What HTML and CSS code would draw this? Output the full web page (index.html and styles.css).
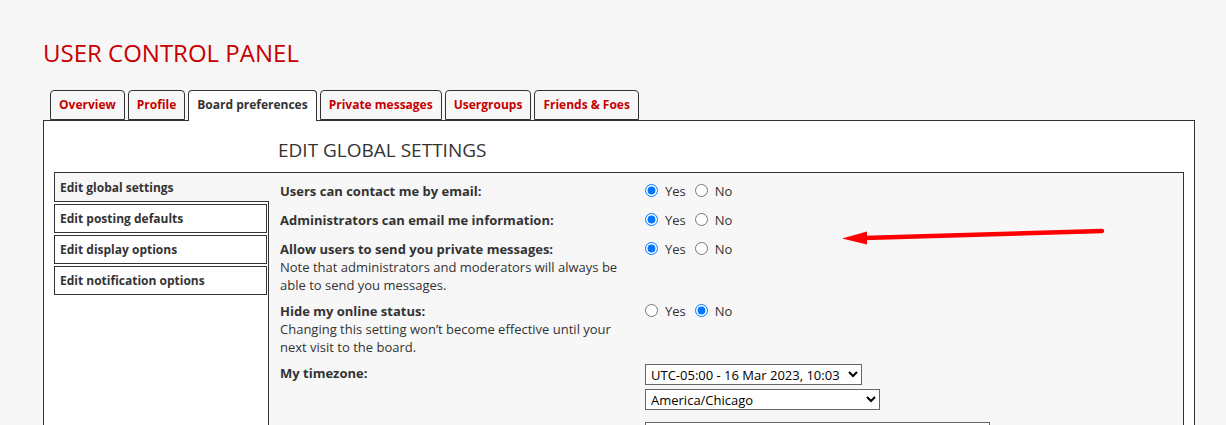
FILE: index.html
```html
<!DOCTYPE html>
<html lang="en">
<head>
  <meta charset="UTF-8">
  <title>User Control Panel</title>
  <link rel="stylesheet" href="styles.css">
</head>
<body>
  <div class="page">
    <h1 class="title">USER CONTROL PANEL</h1>

    <ul class="tabs">
      <li class="tab"><a href="#">Overview</a></li>
      <li class="tab"><a href="#">Profile</a></li>
      <li class="tab active"><a href="#">Board preferences</a></li>
      <li class="tab"><a href="#">Private messages</a></li>
      <li class="tab"><a href="#">Usergroups</a></li>
      <li class="tab"><a href="#">Friends &amp; Foes</a></li>
    </ul>

    <div class="panel">
      <h2 class="heading">EDIT GLOBAL SETTINGS</h2>

      <ul class="menu">
        <li class="menu-item active"><a href="#">Edit global settings</a></li>
        <li class="menu-item"><a href="#">Edit posting defaults</a></li>
        <li class="menu-item"><a href="#">Edit display options</a></li>
        <li class="menu-item"><a href="#">Edit notification options</a></li>
      </ul>

      <form class="box">
        <div class="row">
          <div class="label"><b>Users can contact me by email:</b></div>
          <div class="radios">
            <label><input type="radio" name="email" checked> Yes</label>
            <label><input type="radio" name="email"> No</label>
          </div>
        </div>
        <div class="row">
          <div class="label"><b>Administrators can email me information:</b></div>
          <div class="radios">
            <label><input type="radio" name="massemail" checked> Yes</label>
            <label><input type="radio" name="massemail"> No</label>
          </div>
        </div>
        <div class="row">
          <div class="label">
            <b>Allow users to send you private messages:</b>
            <span>Note that administrators and moderators will always be able to send you messages.</span>
          </div>
          <div class="radios">
            <label><input type="radio" name="pm" checked> Yes</label>
            <label><input type="radio" name="pm"> No</label>
          </div>
        </div>
        <div class="row">
          <div class="label">
            <b>Hide my online status:</b>
            <span>Changing this setting won’t become effective until your next visit to the board.</span>
          </div>
          <div class="radios">
            <label><input type="radio" name="hideonline"> Yes</label>
            <label><input type="radio" name="hideonline" checked> No</label>
          </div>
        </div>
        <div class="row">
          <div class="label"><b>My timezone:</b></div>
          <div class="field">
            <select class="select tz-date">
              <option>UTC-05:00 - 16 Mar 2023, 10:03</option>
            </select>
            <select class="select tz-zone">
              <option>America/Chicago</option>
            </select>
          </div>
        </div>
        <div class="row">
          <div class="label"></div>
          <div class="field">
            <select class="select date-format">
              <option>Thu Mar 16, 2023 10:03 am</option>
            </select>
          </div>
        </div>
      </form>
    </div>
  </div>

  <svg class="arrow" width="270" height="30" viewBox="0 0 270 30">
    <line x1="260" y1="6" x2="22" y2="13" stroke="#f00" stroke-width="4.5" stroke-linecap="round"/>
    <polygon points="0,13.5 25,6.5 25,19.5" fill="#f00"/>
  </svg>
</body>
</html>
```

FILE: styles.css
```css
body {
  margin: 0;
  background: #f7f7f7;
  color: #333;
  font-family: "Open Sans", "Noto Sans", sans-serif;
  font-size: 13px;
}
ul {
  margin: 0;
  padding: 0;
  list-style: none;
}
a {
  text-decoration: none;
}
.page {
  padding: 0 31px 0 43px;
}
.title {
  margin: 37px 0 21px;
  font-size: 24px;
  line-height: 32px;
  font-weight: normal;
  color: #c80000;
}

/* tabs */
.tabs {
  display: flex;
  align-items: flex-start;
  gap: 3px;
  margin-left: 7px;
  height: 30px;
}
.tab {
  height: 30px;
  box-sizing: border-box;
  border: 1px solid #333;
  border-radius: 4px 4px 0 0;
  background: #f7f7f7;
}
.tab a {
  display: block;
  padding: 0 8px;
  line-height: 28px;
  font-size: 12px;
  font-weight: bold;
  color: #c80000;
}
.tab.active {
  height: 31px;
  margin-bottom: -1px;
  border-bottom: none;
  background: #fff;
  position: relative;
  z-index: 1;
}
.tab.active a {
  color: #333;
}

/* panel */
.panel {
  display: grid;
  grid-template-columns: 213px 1fr;
  column-gap: 1px;
  border: 1px solid #333;
  background: #fff;
  padding: 16px 10px 0;
}
.heading {
  grid-column: 2;
  margin: 0 0 9px;
  padding-left: 10px;
  font-size: 19px;
  line-height: 26px;
  font-weight: normal;
  color: #333;
}

/* side menu */
.menu {
  grid-column: 1;
  display: flex;
  flex-direction: column;
  gap: 2px;
}
.menu-item {
  height: 29px;
  box-sizing: border-box;
  border: 1px solid #333;
}
.menu-item a {
  display: block;
  padding-left: 5px;
  line-height: 27px;
  font-size: 12px;
  font-weight: bold;
  color: #333;
}
.menu-item.active {
  height: 30px;
  margin-right: -2px;
  border-right: none;
  background: #f7f7f7;
  position: relative;
  z-index: 1;
}
.menu-item.active a {
  line-height: 29px;
}

/* settings */
.box {
  grid-column: 2;
  margin: 0;
  border: 1px solid #333;
  background: #f7f7f7;
  padding: 9px 11px 20px;
  display: flex;
  flex-direction: column;
  gap: 8px;
}
.row {
  display: grid;
  grid-template-columns: 355px 1fr;
  column-gap: 10px;
}
.label {
  line-height: 18px;
}
.label b,
.label span {
  display: block;
}
.radios {
  display: flex;
  align-items: flex-start;
  gap: 9px;
  height: 21px;
  line-height: 18px;
}
.radios label {
  display: flex;
  align-items: flex-start;
  gap: 7px;
}
.radios input {
  margin: 2px 0 0;
  width: 13px;
  height: 13px;
}
.field {
  display: flex;
  flex-direction: column;
  align-items: flex-start;
}
.select {
  height: 21px;
  margin: 0 0 4px;
  padding: 0 1px;
  border: 1px solid #666;
  border-radius: 0;
  background: #fff;
  color: #000;
  font-family: "Open Sans", "Noto Sans", sans-serif;
  font-size: 13px;
}
.tz-date {
  width: 217px;
}
.tz-zone {
  width: 235px;
}
.date-format {
  width: 345px;
}

.arrow {
  position: absolute;
  left: 842px;
  top: 225px;
}
```
